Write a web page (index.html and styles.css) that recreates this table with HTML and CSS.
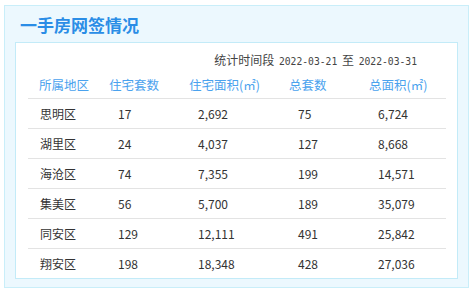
FILE: index.html
```html
<!DOCTYPE html>
<html lang="zh-CN">
<head>
    <meta charset="UTF-8">
    <meta name="viewport" content="width=device-width, initial-scale=1.0">
    <title>一手房网签情况</title>
    <link rel="stylesheet" href="styles.css">
</head>
<body class="page">
    <div class="panel">
        <h2 class="panel__title">一手房网签情况</h2>

        <div class="panel__body">
            <p class="period">统计时间段 <span class="period__date">2022-03-21</span> 至 <span class="period__date">2022-03-31</span></p>

            <table class="stats">
                <colgroup>
                    <col class="stats__col stats__col--area">
                    <col class="stats__col stats__col--count">
                    <col class="stats__col stats__col--size">
                    <col class="stats__col stats__col--total">
                    <col class="stats__col stats__col--total-size">
                </colgroup>
                <thead>
                    <tr>
                        <th>所属地区</th>
                        <th>住宅套数</th>
                        <th>住宅面积(㎡)</th>
                        <th>总套数</th>
                        <th>总面积(㎡)</th>
                    </tr>
                </thead>
                <tbody>
                    <tr><td>思明区</td><td>17</td><td>2,692</td><td>75</td><td>6,724</td></tr>
                    <tr><td>湖里区</td><td>24</td><td>4,037</td><td>127</td><td>8,668</td></tr>
                    <tr><td>海沧区</td><td>74</td><td>7,355</td><td>199</td><td>14,571</td></tr>
                    <tr><td>集美区</td><td>56</td><td>5,700</td><td>189</td><td>35,079</td></tr>
                    <tr><td>同安区</td><td>129</td><td>12,111</td><td>491</td><td>25,842</td></tr>
                    <tr><td>翔安区</td><td>198</td><td>18,348</td><td>428</td><td>27,036</td></tr>
                </tbody>
            </table>
        </div>
    </div>
</body>
</html>
```

FILE: styles.css
```css
body{
    font-family: "Noto Sans CJK SC", sans-serif;
    margin: 0;
    padding: 5px 6px 4px 4px;
    background: #fff;
}
*, ::after, ::before {
    box-sizing: border-box;
}
p,h2{
    margin: 0;
}
.panel{
    border: 1px solid #c9eef9;
    background: #ecf8fe;
    padding: 0 10px 8px;
}
.panel__title{
    padding: 2px 0 0 5px;
    height: 36px;
    line-height: 34px;
    font-size: 17px;
    font-weight: bold;
    color: #2a8de6;
}
.panel__body{
    border: 1px solid #c3ebf8;
    background: #fff;
    padding: 0 11px 0 12px;
}
.period{
    padding: 6px 27px 0 0;
    height: 28px;
    line-height: 22px;
    text-align: right;
    font-size: 12px;
    color: #444;
}
.period__date{
    margin: 0 2px;
    font-family: "DejaVu Sans Mono", monospace;
    font-size: 9.7px;
}
.stats{
    width: 100%;
    border-collapse: collapse;
    table-layout: fixed;
}
.stats__col--area{
    width: 70px;
}
.stats__col--count{
    width: 80px;
}
.stats__col--size{
    width: 100px;
}
.stats__col--total{
    width: 80px;
}
.stats th{
    height: 27px;
    padding: 0 0 0 11px;
    text-align: left;
    font-weight: normal;
    font-size: 12.5px;
    color: #4aa2ee;
    white-space: nowrap;
    border-bottom: 1px solid #e3e3e3;
}
.stats td{
    height: 30px;
    padding: 0 0 0 20px;
    font-size: 12px;
    color: #333;
    border-bottom: 1px solid #e3e3e3;
}
.stats td:first-child{
    padding-left: 12px;
}
.stats tbody tr:last-child td{
    border-bottom: 0;
}
```
